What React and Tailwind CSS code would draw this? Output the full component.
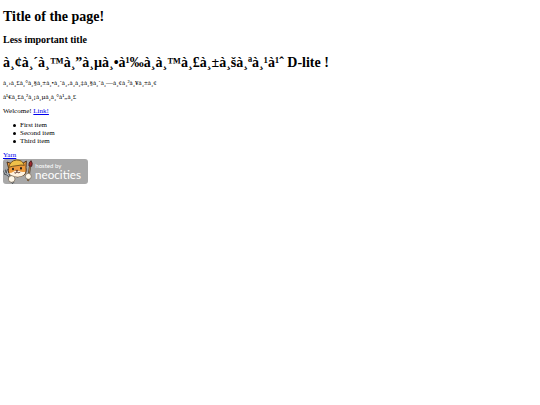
import React from 'react';

const items = ['First item', 'Second item', 'Third item'];

const NeocitiesBadge = () => (
  <svg viewBox="0 0 255 75" className="block w-[85px]" role="img" aria-label="Hosted by Neocities">
    <rect width="255" height="75" rx="9" fill="#a8a8a8" />
    {/* fork */}
    <path d="M4 34l3 10 8 2 6-6-2-10M11 30l4 16 16 27" fill="none" stroke="#3f4449" strokeWidth="7" />
    <path d="M4 34l3 10 8 2 6-6-2-10M11 30l4 16 16 27" fill="none" stroke="#c3c9ce" strokeWidth="3" />
    {/* brush */}
    <path d="M75 66L81 22" stroke="#493322" strokeWidth="6" />
    <path d="M75 66L81 22" stroke="#d9a860" strokeWidth="2" />
    <path d="M78 21q-2-10 6-16q6 7 2 17z" fill="#a3262b" stroke="#4b2020" strokeWidth="3" />
    {/* cat */}
    <path
      d="M17 28L12 9l14 5q16-10 32 0l12-8-1 20q3 15-7 23-18 9-36 1Q12 41 17 28z"
      fill="#ee9a3c"
      stroke="#50351e"
      strokeWidth="3"
    />
    <path d="M17 25Q22 5 40 3q18-1 24 16-9-2-22 1-13 1-25 5z" fill="#efc04a" stroke="#79551d" strokeWidth="3" />
    <path d="M18 42q8 0 13-4l9-4 9 2q8 5 18 2-2 14-21 15-22 1-28-11z" fill="#fff3e0" />
    <ellipse cx="30" cy="30" rx="3" ry="4" fill="#272019" />
    <ellipse cx="54" cy="28" rx="3" ry="4" fill="#272019" />
    <path d="M38 34h7l-3 4zM34 41q5 4 8-2 5 5 10 0" fill="#63382b" stroke="#63382b" strokeWidth="2" />
    {/* paws */}
    <circle cx="26" cy="60" r="10" fill="#fff8ea" stroke="#6a5a48" strokeWidth="2" />
    <circle cx="76" cy="52" r="9" fill="#fff8ea" stroke="#6a5a48" strokeWidth="2" />
    <text x="97" y="27" fill="#fff" fontSize="18" fontFamily="Lato, sans-serif">hosted by</text>
    <text x="96" y="59" fill="#fff" fontSize="35" fontFamily="Lato, sans-serif">neocities</text>
  </svg>
);

const App = () => {
  return (
    <main className="px-[3px] pt-[9px] font-['Liberation_Serif',serif] text-[7px] leading-[8px] text-black">
      <h1 className="text-[14px] leading-4 font-bold">Title of the page!</h1>
      <h2 className="mt-[9px] text-[10px] leading-3 font-bold">Less important title</h2>
      <h1 className="mt-[9px] text-[14px] leading-4 font-bold">
        {'à¸¢à¸´à¸™à¸”à¸µà¸•à¹‰à¸\u00adà¸™à¸£à¸±à¸šà¸ªà¸¹à¹ˆ D-lite !'}
      </h1>
      <p className="mt-2">
        {'à¸›à¸£à¸°à¸§à¸±à¸•à¸´à¸‚à¸\u00adà¸‡à¸§à¸´à¸—à¸¢à¸²à¸¥à¸±à¸¢'}
      </p>
      <p className="mt-1.5">
        {'à¹€à¸£à¸²à¸¡à¸µà¸\u00adà¸°à¹„à¸£'}
      </p>
      <p className="mt-1.5">
        Welcome! <a href="#link" className="text-[#0000ee] underline">Link!</a>
      </p>
      <ul className="mt-1.5 pl-2.5">
        {items.map((item) => (
          <li
            key={item}
            className="flex items-center gap-1 before:size-[3px] before:rounded-full before:bg-black before:content-['']"
          >
            {item}
          </li>
        ))}
      </ul>
      <div className="mt-1.5">
        <a href="#yarn" className="text-[#0000ee] underline">Yarn</a>
      </div>
      <a href="#neocities" className="inline-block">
        <NeocitiesBadge />
      </a>
    </main>
  );
};

export default App;
